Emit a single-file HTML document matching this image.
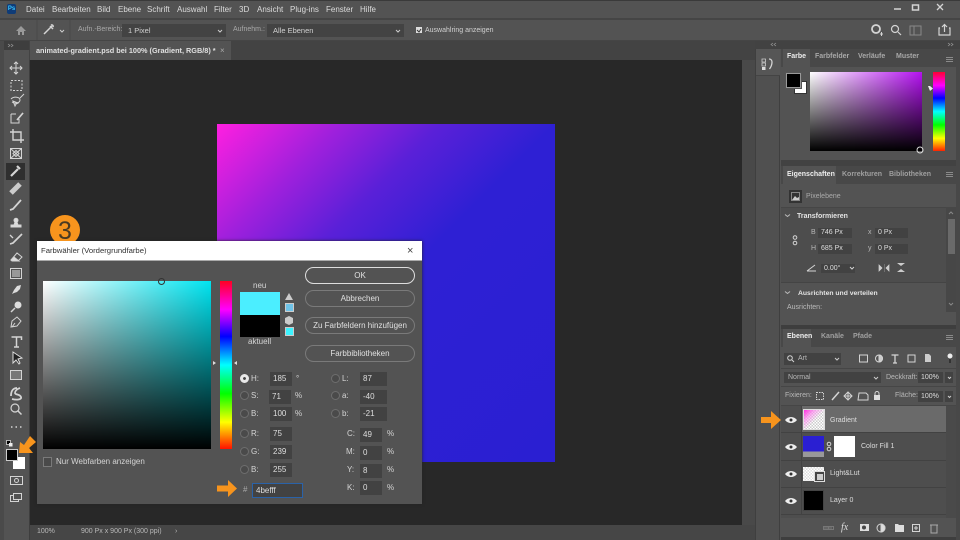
<!DOCTYPE html>
<html lang="de"><head><meta charset="utf-8"><title>Farbwähler</title>
<style>
html,body{margin:0;padding:0;background:#535353;width:960px;height:540px;overflow:hidden}
body{position:relative;font-family:"Liberation Sans",sans-serif;color:#d4d4d4;filter:blur(.3px)}
div{position:absolute;box-sizing:border-box}
.t{white-space:nowrap;line-height:10px;font-size:7px;color:#b8b8b8}
.m{font-size:8px;color:#dcdcdc;top:4px;line-height:12px}
.b{font-weight:bold}
.f{background:#424242;font-size:8px;line-height:14px;padding-left:3px;color:#dedede;height:14px}
.d{font-size:8px;color:#d4d4d4;line-height:12px;white-space:nowrap}
.btn{left:305px;width:110px;border:1px solid #7a7a7a;border-radius:9px;text-align:center;font-size:8px;line-height:15px;color:#e0e0e0;height:17px}
.r{width:9px;height:9px;border-radius:50%;border:1px solid #6e6e6e;background:#4a4a4a}
svg{position:absolute;left:0;top:0}
</style></head><body>
<!-- chrome -->
<div style="left:0;top:0;width:960px;height:1px;background:#3a3a3a"></div>
<div style="left:0;top:18px;width:960px;height:2px;background:#454545"></div>
<div style="left:0;top:40px;width:960px;height:9px;background:#454545"></div>
<div style="left:0;top:41px;width:4px;height:499px;background:#4a4a4a"></div>
<div style="left:4px;top:41px;width:26px;height:9px;background:#3e3e3e"></div>
<div style="left:29px;top:41px;width:726px;height:19px;background:#434343"></div>
<div style="left:30px;top:41px;width:201px;height:19px;background:#535353"></div>
<div style="left:30px;top:60px;width:712px;height:465px;background:#282828"></div>
<div style="left:29px;top:60px;width:1px;height:480px;background:#3e3e3e"></div>
<div style="left:742px;top:60px;width:13px;height:480px;background:#494949"></div>
<div style="left:30px;top:525px;width:725px;height:15px;background:#464646"></div>
<div style="left:755px;top:41px;width:205px;height:8px;background:#424242"></div>
<div style="left:755px;top:49px;width:25px;height:491px;background:#505050;border-left:1px solid #3f3f3f;border-right:1px solid #3f3f3f"></div>
<div style="left:756px;top:49px;width:24px;height:27px;background:#565656;border-bottom:1px solid #444"></div>
<div style="left:956px;top:49px;width:4px;height:491px;background:#484848"></div>

<!-- canvas image -->
<div style="left:217px;top:124px;width:338px;height:338px;background:linear-gradient(135deg,#ff1fe0 0%,#a020dc 18%,#5a20d8 33%,#2e20d4 50%,#2a1fd2 100%)"></div>

<!-- Menu -->
<div style="left:7px;top:4px;width:9px;height:10px;background:#0f3c78;border-radius:2px;font-size:6px;line-height:10px;text-align:center;color:#39c6ff;font-weight:bold">Ps</div>
<div class="t m" style="left:26px">Datei</div><div class="t m" style="left:52px">Bearbeiten</div><div class="t m" style="left:97px">Bild</div><div class="t m" style="left:118px">Ebene</div><div class="t m" style="left:147px">Schrift</div><div class="t m" style="left:177px">Auswahl</div><div class="t m" style="left:214px">Filter</div><div class="t m" style="left:239px">3D</div><div class="t m" style="left:257px">Ansicht</div><div class="t m" style="left:290px">Plug-ins</div><div class="t m" style="left:326px">Fenster</div><div class="t m" style="left:360px">Hilfe</div>

<!-- Options -->
<div class="t" style="left:78px;top:25px;color:#a8a8a8">Aufn.-Bereich:</div>
<div style="left:122px;top:24px;width:104px;height:13px;background:#434343"></div>
<div class="t" style="left:128px;top:26px;color:#d0d0d0;font-size:7.500px">1 Pixel</div>
<div class="t" style="left:233px;top:25px;color:#a8a8a8">Aufnehm.:</div>
<div style="left:267px;top:24px;width:137px;height:13px;background:#434343"></div>
<div class="t" style="left:273px;top:26px;color:#d0d0d0;font-size:7.500px">Alle Ebenen</div>
<div class="t" style="left:425px;top:26px;color:#d0d0d0">Auswahlring anzeigen</div>

<!-- Doc tab -->
<div class="t b" style="left:36px;top:46px;font-size:7.300px;color:#e0e0e0">animated-gradient.psd bei 100% (Gradient, RGB/8) *</div>
<div class="t" style="left:220px;top:46px;color:#aaa;font-size:8px">×</div>

<!-- Status -->
<div class="t" style="left:37px;top:527px">100%</div>
<div class="t" style="left:81px;top:527px">900 Px x 900 Px (300 ppi)</div>
<div class="t" style="left:175px;top:527px">›</div>

<!-- tools active -->
<div style="left:6px;top:163px;width:19px;height:17px;background:#2f2f2f"></div>
<div style="left:6px;top:449px;width:12px;height:12px;background:#000;border:1px solid #ccc;z-index:3"></div>
<div style="left:13px;top:457px;width:12px;height:12px;background:#fff"></div>

<!-- Color panel -->
<div style="left:781px;top:49px;width:175px;height:18px;background:#484848"></div>
<div style="left:783px;top:49px;width:27px;height:18px;background:#535353"></div>
<div class="t b" style="left:787px;top:52px;color:#eee">Farbe</div>
<div class="t b" style="left:815px;top:52px;color:#a8a8a8">Farbfelder</div>
<div class="t b" style="left:858px;top:52px;color:#a8a8a8">Verläufe</div>
<div class="t b" style="left:896px;top:52px;color:#a8a8a8">Muster</div>
<div style="left:794px;top:81px;width:13px;height:13px;background:#fff;border:1px solid #333"></div>
<div style="left:786px;top:73px;width:15px;height:15px;background:#000;border:1px solid #999;outline:1px solid #555"></div>
<div style="left:810px;top:72px;width:112px;height:79px;background:linear-gradient(to bottom,rgba(0,0,0,0),#000),linear-gradient(to right,#fff,#b412f0)"></div>
<div style="left:933px;top:72px;width:12px;height:79px;background:linear-gradient(to bottom,#f03 0%,#f0f 17%,#00f 33%,#0ff 50%,#0f0 67%,#ff0 84%,#f20 100%)"></div>

<!-- Eigenschaften -->
<div style="left:781px;top:160px;width:175px;height:6px;background:#424242"></div>
<div style="left:781px;top:166px;width:175px;height:18px;background:#484848"></div>
<div style="left:783px;top:166px;width:53px;height:18px;background:#535353"></div>
<div class="t b" style="left:787px;top:170px;color:#eee">Eigenschaften</div>
<div class="t b" style="left:842px;top:170px;color:#a0a0a0">Korrekturen</div>
<div class="t b" style="left:889px;top:170px;color:#a0a0a0">Bibliotheken</div>
<div style="left:789px;top:190px;width:13px;height:13px;background:#333"></div>
<div class="t" style="left:806px;top:192px;color:#aaa">Pixelebene</div>
<div style="left:781px;top:207px;width:165px;height:76px;background:#4d4d4d;border-top:1px solid #464646;border-bottom:1px solid #444"></div>
<div class="t b" style="left:797px;top:212px;color:#e4e4e4">Transformieren</div>
<div class="t" style="left:811px;top:228px">B</div><div class="t" style="left:811px;top:244px">H</div>
<div class="t" style="left:868px;top:228px">x</div><div class="t" style="left:868px;top:244px">y</div>
<div class="f" style="left:818px;top:228px;width:34px;height:10px;font-size:7px;line-height:10px">746 Px</div>
<div class="f" style="left:818px;top:244px;width:34px;height:10px;font-size:7px;line-height:10px">685 Px</div>
<div class="f" style="left:875px;top:228px;width:33px;height:10px;font-size:7px;line-height:10px">0 Px</div>
<div class="f" style="left:875px;top:244px;width:33px;height:10px;font-size:7px;line-height:10px">0 Px</div>
<div class="f" style="left:821px;top:264px;width:34px;height:9px;font-size:7px;line-height:9px">0.00°</div>
<div class="t b" style="left:798px;top:289px;color:#e4e4e4;font-size:6.800px">Ausrichten und verteilen</div>
<div class="t" style="left:787px;top:303px;color:#bbb">Ausrichten:</div>
<div style="left:946px;top:207px;width:10px;height:105px;background:#474747"></div>
<div style="left:948px;top:219px;width:7px;height:35px;background:#6a6a6a"></div>

<!-- Ebenen -->
<div style="left:781px;top:325px;width:175px;height:4px;background:#3e3e3e"></div>
<div style="left:781px;top:329px;width:175px;height:18px;background:#484848"></div>
<div style="left:783px;top:329px;width:28px;height:18px;background:#535353"></div>
<div class="t b" style="left:787px;top:332px;color:#eee">Ebenen</div>
<div class="t b" style="left:821px;top:332px;color:#a0a0a0">Kanäle</div>
<div class="t b" style="left:853px;top:332px;color:#a0a0a0">Pfade</div>
<div style="left:784px;top:353px;width:57px;height:12px;background:#424242"></div>
<div class="t" style="left:798px;top:354px">Art</div>
<div style="left:781px;top:368px;width:175px;height:1px;background:#464646"></div>
<div style="left:784px;top:372px;width:97px;height:11px;background:#424242"></div>
<div class="t" style="left:788px;top:373px">Normal</div>
<div class="t" style="left:886px;top:373px">Deckkraft:</div>
<div class="f" style="left:918px;top:372px;width:25px;height:11px;font-size:7px;line-height:11px">100%</div>
<div style="left:945px;top:372px;width:8px;height:11px;background:#424242"></div>
<div style="left:781px;top:386px;width:175px;height:1px;background:#464646"></div>
<div class="t" style="left:785px;top:391px">Fixieren:</div>
<div class="t" style="left:895px;top:391px">Fläche:</div>
<div class="f" style="left:918px;top:391px;width:25px;height:11px;font-size:7px;line-height:11px">100%</div>
<div style="left:945px;top:391px;width:8px;height:11px;background:#424242"></div>
<div style="left:781px;top:406px;width:165px;height:112px;background:#4e4e4e"></div>
<div style="left:781px;top:405px;width:175px;height:1px;background:#464646"></div>
<div style="left:802px;top:406px;width:144px;height:26px;background:#6a6a6a"></div>
<div style="left:946px;top:406px;width:10px;height:112px;background:#4a4a4a"></div>
<div style="left:781px;top:432px;width:165px;height:1px;background:#424242"></div>
<div style="left:781px;top:460px;width:165px;height:1px;background:#424242"></div>
<div style="left:781px;top:487px;width:165px;height:1px;background:#424242"></div>
<div style="left:781px;top:514px;width:165px;height:1px;background:#424242"></div>
<div style="left:801px;top:406px;width:1px;height:108px;background:#424242"></div>
<div style="left:803px;top:409px;width:22px;height:21px;border:1px solid #ddd;background:linear-gradient(135deg,#ff30e0 0%,rgba(255,140,240,.7) 28%,rgba(255,255,255,0) 55%),repeating-conic-gradient(#ccc 0 25%,#fff 0 50%) 0 0/3px 3px"></div>
<div class="t" style="left:830px;top:416px;color:#ddd">Gradient</div>
<div style="left:803px;top:436px;width:21px;height:21px;background:linear-gradient(to bottom,#2a1fd2 75%,#999 75%)"></div>
<div style="left:834px;top:436px;width:21px;height:21px;background:#fff"></div>
<div class="t" style="left:861px;top:442px;color:#ddd">Color Fill 1</div>
<div style="left:803px;top:467px;width:21px;height:14px;background:repeating-conic-gradient(#ddd 0 25%,#fff 0 50%) 0 0/3px 3px"></div>
<div style="left:814px;top:471px;width:11px;height:11px;background:#444;border:1px solid #ddd"></div>
<div class="t" style="left:830px;top:469px;color:#ddd">Light&amp;Lut</div>
<div style="left:803px;top:490px;width:21px;height:21px;background:#000;border:1px solid #444"></div>
<div class="t" style="left:830px;top:496px;color:#ddd">Layer 0</div>
<div style="left:781px;top:537px;width:175px;height:3px;background:#3e3e3e"></div>

<!-- Dialog -->
<div style="left:37px;top:241px;width:385px;height:263px;background:#535353;box-shadow:0 0 3px #222"></div>
<div style="left:37px;top:241px;width:385px;height:20px;background:#fff;border-bottom:1px solid #aaa"></div>
<div style="left:50px;top:215px;width:30px;height:30px;border-radius:50%;background:#f7941d"></div>
<div style="left:50px;top:216px;width:30px;font-size:25px;line-height:30px;text-align:center;color:#4a3a22">3</div>
<div style="left:37px;top:241px;width:385px;height:6px;background:#fff"></div>
<div style="left:41px;top:245px;font-size:7.700px;line-height:12px;color:#333;white-space:nowrap">Farbwähler (Vordergrundfarbe)</div>
<div style="left:407px;top:245px;font-size:11px;line-height:12px;color:#444">×</div>
<div style="left:43px;top:281px;width:168px;height:168px;background:linear-gradient(to bottom,rgba(0,0,0,0),#000),linear-gradient(to right,#fff,#00e4f0)"></div>
<div style="left:158px;top:278px;width:7px;height:7px;border:1px solid #333;border-radius:50%"></div>
<div style="left:220px;top:281px;width:12px;height:168px;background:linear-gradient(to bottom,#f02 0%,#f0f 17%,#00f 33%,#0ff 50%,#0f0 67%,#ff0 84%,#f10 100%)"></div>
<div style="left:43px;top:457px;width:9px;height:10px;border:1px solid #7a7a7a;background:#4a4a4a"></div>
<div class="d" style="left:56px;top:456px">Nur Webfarben anzeigen</div>
<div class="d" style="left:253px;top:280px">neu</div>
<div style="left:240px;top:292px;width:40px;height:23px;background:#4beeff"></div>
<div style="left:240px;top:315px;width:40px;height:22px;background:#000"></div>
<div class="d" style="left:248px;top:336px">aktuell</div>
<div style="left:285px;top:303px;width:9px;height:9px;background:#6fc3e8;border:1px solid #ccc"></div>
<div style="left:285px;top:327px;width:9px;height:9px;background:#3cf3ff;border:1px solid #ccc"></div>
<div class="btn" style="top:267px;border-color:#ddd">OK</div>
<div class="btn" style="top:290px">Abbrechen</div>
<div class="btn" style="top:317px">Zu Farbfeldern hinzufügen</div>
<div class="btn" style="top:345px">Farbbibliotheken</div>

<div class="r" style="left:240px;top:374px;background:#e8e8e8;border:3px solid #e8e8e8;box-shadow:inset 0 0 0 2px #444"></div>
<div class="r" style="left:240px;top:391px"></div><div class="r" style="left:240px;top:409px"></div>
<div class="r" style="left:240px;top:429px"></div><div class="r" style="left:240px;top:447px"></div><div class="r" style="left:240px;top:465px"></div>
<div class="r" style="left:331px;top:374px"></div><div class="r" style="left:331px;top:391px"></div><div class="r" style="left:331px;top:409px"></div>

<div class="d" style="left:251px;top:373px">H:</div><div class="d" style="left:251px;top:390px">S:</div><div class="d" style="left:251px;top:408px">B:</div>
<div class="d" style="left:251px;top:428px">R:</div><div class="d" style="left:251px;top:446px">G:</div><div class="d" style="left:251px;top:464px">B:</div>
<div class="d" style="left:342px;top:373px">L:</div><div class="d" style="left:342px;top:390px">a:</div><div class="d" style="left:342px;top:408px">b:</div>
<div class="d" style="left:347px;top:428px">C:</div><div class="d" style="left:346px;top:446px">M:</div><div class="d" style="left:347px;top:464px">Y:</div><div class="d" style="left:347px;top:482px">K:</div>

<div class="f" style="left:270px;top:372px;width:22px">185</div>
<div class="f" style="left:269px;top:390px;width:22px">71</div>
<div class="f" style="left:270px;top:407px;width:22px">100</div>
<div class="f" style="left:270px;top:427px;width:22px">75</div>
<div class="f" style="left:270px;top:445px;width:22px">239</div>
<div class="f" style="left:270px;top:463px;width:22px">255</div>
<div class="f" style="left:360px;top:372px;width:27px">87</div>
<div class="f" style="left:360px;top:390px;width:27px">-40</div>
<div class="f" style="left:360px;top:407px;width:27px">-21</div>
<div class="f" style="left:360px;top:428px;width:22px">49</div>
<div class="f" style="left:360px;top:446px;width:22px">0</div>
<div class="f" style="left:360px;top:464px;width:22px">8</div>
<div class="f" style="left:360px;top:481px;width:22px">0</div>
<div class="d" style="left:296px;top:373px">°</div><div class="d" style="left:295px;top:390px">%</div><div class="d" style="left:295px;top:408px">%</div>
<div class="d" style="left:387px;top:428px">%</div><div class="d" style="left:387px;top:446px">%</div><div class="d" style="left:387px;top:464px">%</div><div class="d" style="left:387px;top:482px">%</div>
<div class="d" style="left:243px;top:484px;color:#aaa">#</div>
<div class="f" style="left:252px;top:483px;width:51px;height:15px;border:1px solid #2a62a8;padding-left:3px;line-height:13px">4befff</div>

<svg width="960" height="540" viewBox="0 0 960 540" fill="none" stroke="#d4d4d4" stroke-width="1">
<!-- dialog markers -->
<path d="M213 361v4l3-2zM237 361v4l-3-2z" fill="#ddd" stroke="none"/>
<path d="M289 293l4 7h-8zM285 318l4-2 4 2v5l-4 2-4-2z" fill="#ccc" stroke="none"/>
<!-- arrows -->
<path d="M217 485.500h11v-5.500l9 8.500-9 8.500v-5.500h-11z" fill="#f7941d" stroke="none"/>
<path d="M761 417h10v-6l10 9-10 9v-6h-10z" fill="#f7941d" stroke="none"/>
<path d="M19 453l1-11 4 3 6-9 6 6-7 6 4 5z" fill="#f7941d" stroke="none"/>
<!-- window -->
<path d="M894 9h7" stroke-width="1.500"/><rect x="912.500" y="5" width="6" height="5" stroke-width="1.500"/><path d="M937 4l6 6M943 4l-6 6" stroke-width="1.300"/>
<!-- home / options -->
<path d="M16 31l5-5 5 5h-2v4h-2v-3h-2v3h-2v-4z" fill="#9a9a9a" stroke="none"/>
<path d="M44 34l8-8M50 26l3 3M51 25a1.500 1.500 0 0 1 2 2" stroke-width="1.500"/>
<path d="M60 30l2 2 2-2M218 30l2 2 2-2M396 30l2 2 2-2" stroke="#ccc"/>
<path d="M37 20v20M70 20v20" stroke="#4a4a4a"/>
<rect x="416" y="27" width="6" height="6" fill="#ddd" stroke="none"/><path d="M417 30l2 2 2-3" stroke="#333"/>
<circle cx="876" cy="29" r="4" stroke-width="1.800"/><path d="M880 34h3M881.500 32v4" /><circle cx="895" cy="29" r="3.500" stroke-width="1.200"/><path d="M898 32l3 3" stroke-width="1.200"/>
<rect x="910" y="26" width="11" height="9" stroke="#888"/><path d="M914 26v9" stroke="#888"/>
<path d="M940 28h-1v7h11v-7h-1M944.500 32v-7M942 27l2.500-2.500 2.500 2.500" stroke-width="1.200"/>
<!-- collapse marks -->
<path d="M8 44l2 1.500-2 1.500M11 44l2 1.500-2 1.500" stroke="#999" stroke-width=".7"/>
<path d="M773 43l-2 1.500 2 1.500M776 43l-2 1.500 2 1.500M948 43l2 1.500-2 1.500M951 43l2 1.500-2 1.500" stroke="#999" stroke-width=".7"/>
<!-- panel dock icon -->
<path d="M762 59h3.500v3h-3.500zM762 63h3.500v3h-3.500z" stroke="#ccc" stroke-width=".8"/><path d="M762 67h3.500v3h-3.500z" fill="#ddd" stroke="none"/><path d="M769 59c2 0 3 1.500 3 3 0 3-1 5-2.500 7" stroke-width="1.300"/>
<!-- panel menus -->
<path d="M946 57.500h7M946 59.500h7M946 61.500h7M946 172.500h7M946 174.500h7M946 176.500h7M946 335.500h7M946 337.500h7M946 339.500h7" stroke="#8a8a8a" stroke-width="1"/>
<path d="M928 86h2l3 2.500-3 2.500z" fill="#eee" stroke="none"/>
<circle cx="920" cy="150" r="3" stroke="#ddd"/>
<!-- tools -->
<g stroke-width="1">
<path d="M16 62v12M10 68h12M14 64l2-2 2 2M14 72l2 2 2-2M12 66l-2 2 2 2M20 66l2 2-2 2"/>
<rect x="11" y="80.500" width="11" height="10" stroke-dasharray="2 1.500"/>
<path d="M11 99c3-3 9-2 9 1s-5 4-8 2M15 106l-2-5 5 2-2 1zM20 98l4-4"/>
<path d="M11 114h5M11 114v9h8v-4M18 119l5-6" /><path d="M17 120l6-7" stroke-width="1.700"/>
<path d="M13 129v11h11M10 132h11v11" stroke-width="1.400"/>
<rect x="10.500" y="148.500" width="11" height="10"/><path d="M10.500 148.500l11 10M21.500 148.500l-11 10M13 153.500l3-3 3 3-3 3z"/>
<path d="M11 176l7-7M17 166l3 3" stroke-width="2.200"/>
<path d="M11 193l9-9" stroke-width="5" stroke="#ccc"/>
<path d="M10 210l3-1 8-9" stroke-width="1.800"/>
<path d="M11 225h10v2h-10zM14 225l1-3a2 2 0 1 1 2 0l1 3" fill="#ddd"/>
<path d="M10 244l3-1 9-9" stroke-width="1.700"/><path d="M10 235l3 3" stroke-width="1.300"/>
<path d="M11 260l6-7 5 4-4 4h-6z"/><path d="M11 260l3-3 5 4h-6z" fill="#ddd"/>
<rect x="10.500" y="268.500" width="11" height="10"/><rect x="12" y="270" width="8" height="7" fill="#999" stroke="none"/>
<path d="M12 294l2-4 3-4 4-1-1 4-3 3-3 1z" fill="#ddd" stroke="none"/>
<circle cx="18" cy="305" r="3.500" fill="#ddd" stroke="none"/><path d="M15 308l-4 4" stroke-width="1.500"/>
<path d="M11 327l1-6 5-4 4 4-4 5z"/><path d="M15 323l-3 4"/>
<path d="M11.500 337h10v3M16.500 337v10M14 347h5" stroke-width="1.500"/>
<path d="M13 352v11l3-3 3 4 1-1-2-4 4-1z" fill="#222" stroke="#ddd"/>
<rect x="10.500" y="370.500" width="11" height="9" fill="#777"/>
<path d="M11 396c0-6 3-8 6-8M20 388c-3 1-5 3-5 5s5 1 6 4-5 3-9 2" stroke-width="1.800"/>
<circle cx="15" cy="408" r="4" stroke-width="1.200"/><path d="M18 411l3.500 3.500" stroke-width="1.500"/>
<path d="M11 427h1.500M15.500 427h1.500M20 427h1.500" stroke-width="1.500"/>
<rect x="6.500" y="440.500" width="4" height="4" fill="#000" stroke="#eee" stroke-width=".7"/><rect x="9" y="443" width="3.500" height="3.500" fill="#eee" stroke="none"/>
<rect x="10.500" y="476.500" width="12" height="8"/><circle cx="16.500" cy="480.500" r="2"/>
<rect x="10.500" y="495.500" width="8" height="6"/><rect x="13.500" y="493.500" width="8" height="6" fill="#535353"/>
</g>
<!-- properties -->
<path d="M785 214.500l2.500 2 2.500-2M785 291.500l2.500 2 2.500-2" stroke="#bbb"/>
<circle cx="795" cy="237.500" r="1.800"/><circle cx="795" cy="243" r="1.800"/>
<path d="M807 271l8-6M807 271h9" /><path d="M850 267l2 2 2-2" />
<path d="M879 265v6l3-3zM889 265v6l-3-3z" fill="#ccc" stroke-width=".7"/><path d="M884.500 264v8" stroke="#888" stroke-width=".6"/>
<path d="M897 263h8l-4 3zM897 272h8l-4-3z" fill="#ccc" stroke="none"/>
<path d="M949 214l2-2 2 2M949 303l2 2 2-2" stroke="#888"/>
<rect x="791.500" y="192.500" width="8" height="8" stroke="#aaa" stroke-width=".7"/><path d="M792 200l3-4 2 2 2-1v3z" fill="#ccc" stroke="none"/>
<!-- layers icons -->
<circle cx="790" cy="358" r="2.300"/><path d="M792 360l2 2"/>
<path d="M835 358l2 2 2-2M874 377l2 2 2-2M948 377l1.500 1.500 1.500-1.500M948 396l1.500 1.500 1.500-1.500" stroke="#ccc"/>
<rect x="859.500" y="355" width="8" height="7"/><circle cx="879" cy="358.500" r="3.500"/><path d="M879 355a3.500 3.500 0 0 1 0 7z" fill="#ccc"/>
<path d="M891.500 355h7M895 355v8M893 363h4" stroke-width="1.300"/><rect x="908" y="355" width="7" height="7"/>
<path d="M925 354h4l2 2v6h-6z" fill="#ccc" stroke="none"/>
<circle cx="950" cy="356" r="2.500" fill="#eee" stroke="none"/><path d="M950 359v4" stroke-width="2" stroke="#333"/>
<rect x="816.500" y="392.500" width="7" height="7" stroke-dasharray="1.500 1"/><path d="M832 400l7-8" stroke-width="1.500"/>
<path d="M848 392v8M844 396h8M846 394l2-2 2 2M846 398l2 2 2-2M846 394l-2 2 2 2M850 394l2 2-2 2"/>
<path d="M859 393h7l2 2v5h-10z"/><rect x="874" y="395" width="6" height="5" fill="#ddd" stroke="none"/><path d="M875 395v-1.500a2 2 0 0 1 4 0v1.500"/>
<path d="M785 420c3-4 9-4 12 0-3 4-9 4-12 0zM785 447c3-4 9-4 12 0-3 4-9 4-12 0zM785 474c3-4 9-4 12 0-3 4-9 4-12 0zM785 501c3-4 9-4 12 0-3 4-9 4-12 0z" fill="#eee" stroke="none"/>
<circle cx="791" cy="420" r="1.500" fill="#333" stroke="none"/><circle cx="791" cy="447" r="1.500" fill="#333" stroke="none"/><circle cx="791" cy="474" r="1.500" fill="#333" stroke="none"/><circle cx="791" cy="501" r="1.500" fill="#333" stroke="none"/>
<circle cx="829" cy="444" r="1.800"/><circle cx="829" cy="449" r="1.800"/>
<rect x="817" y="474" width="6" height="6" fill="#ccc" stroke="none"/>
<path d="M823 528h9" stroke="#777"/><rect x="823.500" y="526.500" width="5" height="3" stroke="#777"/><rect x="828.500" y="526.500" width="5" height="3" stroke="#777"/>
<rect x="860" y="524" width="9" height="7" fill="#ddd" stroke="none"/><circle cx="864" cy="527.500" r="2" fill="#444" stroke="none"/>
<circle cx="881" cy="528" r="4"/><path d="M881 524a4 4 0 0 1 0 8z" fill="#ddd"/>
<path d="M895 524h3l1 1h5v7h-9z" fill="#ddd" stroke="none"/><rect x="912.500" y="524.500" width="7" height="7"/><path d="M916 526v4M914 528h4"/>
<path d="M930 525h8M931 525v8h6v-8" stroke="#aaa"/>
</svg>
<div style="left:841px;top:522px;font:italic 10px 'Liberation Serif',serif;color:#ddd;line-height:12px">fx</div>
</body></html>
